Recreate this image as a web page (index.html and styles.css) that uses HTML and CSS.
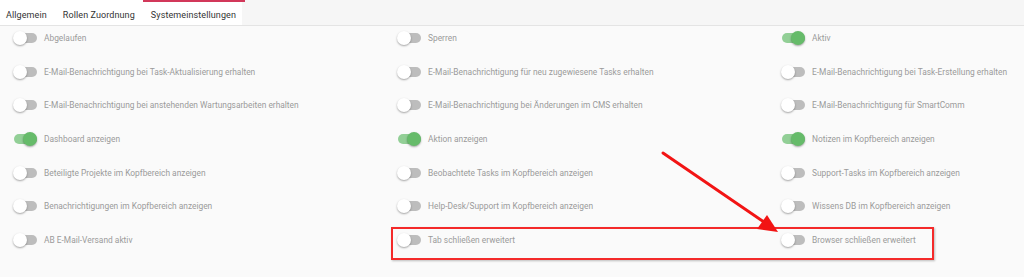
FILE: index.html
```html
<!DOCTYPE html>
<html lang="de">
<head>
<meta charset="utf-8">
<title>Systemeinstellungen</title>
<link rel="stylesheet" href="styles.css">
</head>
<body>
<div class="page">
  <div class="tabbar">
    <div class="tabs">
      <div class="tab">Allgemein</div>
      <div class="tab">Rollen Zuordnung</div>
      <div class="tab active">Systemeinstellungen</div>
    </div>
  </div>
  <div class="grid">
    <div class="item"><span class="toggle"></span><span class="label">Abgelaufen</span></div>
    <div class="item"><span class="toggle"></span><span class="label">Sperren</span></div>
    <div class="item"><span class="toggle on"></span><span class="label">Aktiv</span></div>

    <div class="item"><span class="toggle"></span><span class="label">E-Mail-Benachrichtigung bei Task-Aktualisierung erhalten</span></div>
    <div class="item"><span class="toggle"></span><span class="label">E-Mail-Benachrichtigung für neu zugewiesene Tasks erhalten</span></div>
    <div class="item"><span class="toggle"></span><span class="label">E-Mail-Benachrichtigung bei Task-Erstellung erhalten</span></div>

    <div class="item"><span class="toggle"></span><span class="label">E-Mail-Benachrichtigung bei anstehenden Wartungsarbeiten erhalten</span></div>
    <div class="item"><span class="toggle"></span><span class="label">E-Mail-Benachrichtigung bei Änderungen im CMS erhalten</span></div>
    <div class="item"><span class="toggle"></span><span class="label">E-Mail-Benachrichtigung für SmartComm</span></div>

    <div class="item"><span class="toggle on"></span><span class="label">Dashboard anzeigen</span></div>
    <div class="item"><span class="toggle on"></span><span class="label">Aktion anzeigen</span></div>
    <div class="item"><span class="toggle on"></span><span class="label">Notizen im Kopfbereich anzeigen</span></div>

    <div class="item"><span class="toggle"></span><span class="label">Beteiligte Projekte im Kopfbereich anzeigen</span></div>
    <div class="item"><span class="toggle"></span><span class="label">Beobachtete Tasks im Kopfbereich anzeigen</span></div>
    <div class="item"><span class="toggle"></span><span class="label">Support-Tasks im Kopfbereich anzeigen</span></div>

    <div class="item"><span class="toggle"></span><span class="label">Benachrichtigungen im Kopfbereich anzeigen</span></div>
    <div class="item"><span class="toggle"></span><span class="label">Help-Desk/Support im Kopfbereich anzeigen</span></div>
    <div class="item"><span class="toggle"></span><span class="label">Wissens DB im Kopfbereich anzeigen</span></div>

    <div class="item"><span class="toggle"></span><span class="label">AB E-Mail-Versand aktiv</span></div>
    <div class="item"><span class="toggle"></span><span class="label">Tab schließen erweitert</span></div>
    <div class="item"><span class="toggle"></span><span class="label">Browser schließen erweitert</span></div>
  </div>

  <div class="mark"></div>
  <svg class="arrow" width="1024" height="277" viewBox="0 0 1024 277" aria-hidden="true">
    <line x1="663" y1="153" x2="764" y2="222" stroke="#f21414" stroke-width="3" stroke-linecap="round"/>
    <polygon points="778,232 757,229 767,215" fill="#f21414"/>
  </svg>
</div>
</body>
</html>
```

FILE: styles.css
```css
* { box-sizing: border-box; }

html, body {
  margin: 0;
  padding: 0;
}

body {
  background: #fafafa;
  font-family: Roboto, "Liberation Sans", Arial, sans-serif;
  width: 1024px;
  height: 277px;
  overflow: hidden;
}

.page {
  position: relative;
  width: 1024px;
  height: 277px;
}

.tabbar {
  height: 26px;
  background: #f6f6f6;
  border-bottom: 1px solid #e4e4e4;
}

.tabs {
  display: flex;
  width: 242px;
  height: 25px;
  background: #ffffff;
}

.tab {
  display: flex;
  align-items: center;
  height: 25px;
  padding: 2px 8px 0 8px;
  font-size: 9px;
  color: #333333;
  border-top: 2px solid transparent;
  white-space: nowrap;
  letter-spacing: 0.1px;
}

.tab:first-child {
  padding-left: 6px;
}

.tab.active {
  border-top-color: #d2385a;
  padding-right: 9px;
}

.grid {
  display: grid;
  grid-template-columns: 384px 384px 243px;
  grid-auto-rows: 24px;
  row-gap: 9.67px;
  padding-left: 13px;
}

.item {
  display: flex;
  align-items: center;
  gap: 7px;
}

.toggle {
  position: relative;
  flex: 0 0 auto;
  width: 24px;
  height: 14px;
}

.toggle::before {
  content: "";
  position: absolute;
  left: 1px;
  right: 0;
  top: 2px;
  height: 10px;
  border-radius: 5px;
  background: #bdbdbd;
}

.toggle::after {
  content: "";
  position: absolute;
  left: 0;
  top: 0;
  width: 14px;
  height: 14px;
  border-radius: 50%;
  background: #ffffff;
  box-shadow: 0 1px 2px rgba(0, 0, 0, 0.35);
}

.toggle.on::before {
  background: #92cf96;
}

.toggle.on::after {
  left: 10px;
  background: #66bb6a;
}

.label {
  font-size: 8.4px;
  color: #9a9a9a;
  white-space: nowrap;
}

.mark {
  position: absolute;
  left: 391px;
  top: 227px;
  width: 543px;
  height: 33px;
  border: 2px solid #f42a2a;
  box-shadow: 1px 1px 2px rgba(0, 0, 0, 0.25);
}

.arrow {
  position: absolute;
  left: 0;
  top: 0;
  pointer-events: none;
}
```
